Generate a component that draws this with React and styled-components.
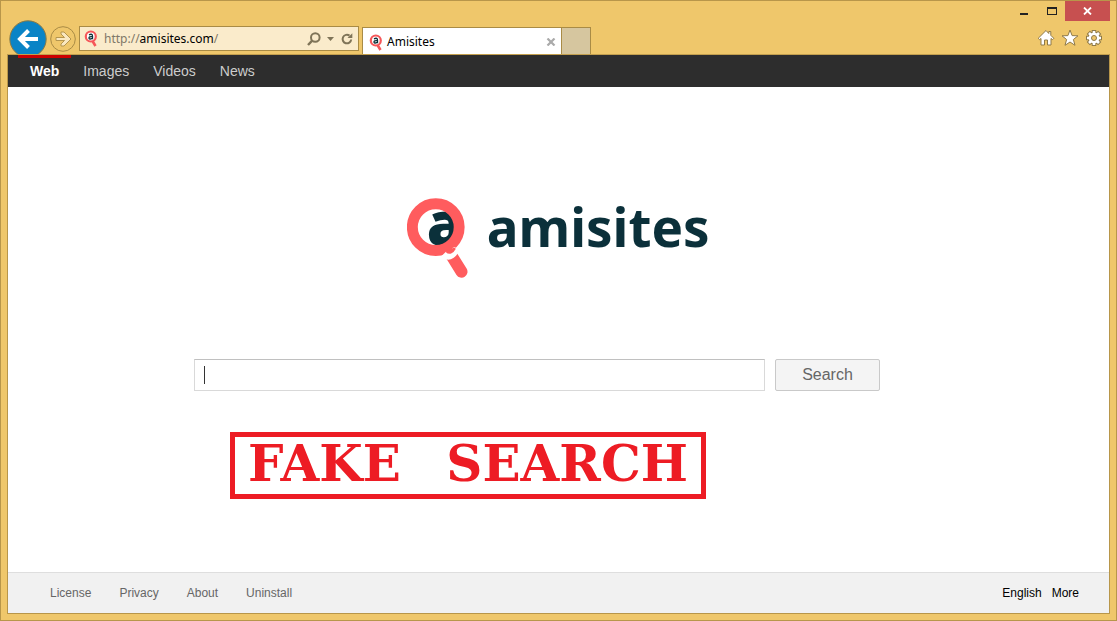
import React from "react";
import styled, { createGlobalStyle, css } from "styled-components";

const frame = "#b8964a";
const gold = "#efc76b";
const uiFont = `"Noto Sans", "Open Sans", sans-serif`;
const pageFont = `"Liberation Sans", Arial, sans-serif`;

const GlobalStyle = createGlobalStyle`
  * {
    box-sizing: border-box;
  }
  body {
    margin: 0;
    font-family: ${pageFont};
  }
  button {
    border: 0;
    padding: 0;
    background: none;
    font: inherit;
    cursor: pointer;
  }
  svg {
    display: block;
    flex: none;
  }
`;

const Window = styled.div`
  display: flex;
  flex-direction: column;
  min-height: 100vh;
  padding: 0 6px 6px;
  border: 1px solid ${frame};
  background: ${gold};
`;
const TitleBar = styled.div`
  display: flex;
  justify-content: flex-end;
  height: 20px;
`;
const WindowButton = styled.button`
  display: flex;
  align-items: center;
  justify-content: center;
  width: 27px;

  ${p =>
    p.$close &&
    css`
      width: 45px;
      background: #c75050;
    `}
`;
const ToolBar = styled.div`
  display: flex;
  align-items: flex-end;
  height: 33px;
  padding-left: 2px;
`;
const NavButton = styled.button`
  margin-right: ${p => p.$gap}px;
`;
const AddressBar = styled.form`
  display: flex;
  align-items: center;
  gap: 6px;
  width: 280px;
  height: 25px;
  margin: 0 3px 3px 0;
  padding: 0 4px;
  border: 1px solid #a98b45;
  background: #faebcb;
`;
const Url = styled.div`
  flex: 1;
  font: 12px/16px ${uiFont};
  color: #000;
`;
const Muted = styled.span`
  color: #7f7868;
`;
const Tabs = styled.div`
  display: flex;
  align-items: stretch;
  height: 27px;
  border: 1px solid #a98b45;
  border-bottom: 0;
`;
const Tab = styled.div`
  display: flex;
  align-items: center;
  gap: 4px;
  width: 199px;
  padding: 2px 5px 0 6px;
  border-right: 1px solid #a98b45;
  background: #fff;
  font: 12px/16px ${uiFont};
`;
const TabTitle = styled.span`
  flex: 1;
`;
const NewTab = styled.button`
  width: 28px;
  background: #d6c69f;
`;
const Tools = styled.div`
  display: flex;
  gap: 6px;
  margin: 0 7px 7px auto;
`;

const Page = styled.div`
  display: flex;
  flex-direction: column;
  flex: 1;
  border: 1px solid ${frame};
  border-top-color: #c39f4e;
  background: #fff;
`;
const TopNav = styled.nav`
  display: flex;
  height: 32px;
  padding-left: 10px;
  background: #2d2d2d;
`;
const TopLink = styled.a`
  padding: 5px 12px 0;
  border-top: 3px solid ${p => (p.$active ? "#cc0000" : "transparent")};
  color: ${p => (p.$active ? "#fff" : "#ccc")};
  font-size: 14px;
  font-weight: ${p => (p.$active ? "bold" : "normal")};
  line-height: 16px;
  text-decoration: none;
`;
const Main = styled.main`
  flex: 1;
  width: 100%;
  max-width: 729px;
  margin: 0 auto;
  padding-top: 110px;
`;
const Logo = styled.h1`
  display: flex;
  justify-content: center;
  gap: 18px;
  margin: 0 0 80px;
  color: #0b303a;
  font: bold 53px/60px ${uiFont};
`;
const SearchForm = styled.form`
  display: flex;
  gap: 10px;
  max-width: 686px;
  margin-bottom: 41px;
`;
const SearchInput = styled.input`
  flex: 1;
  min-width: 0;
  height: 32px;
  padding: 0 10px;
  border: 1px solid #d9d9d9;
  border-top-color: #c0c0c0;
  outline: 0;
  background: #fff linear-gradient(#333, #333) 9px 6px / 1px 18px no-repeat;
  font: 16px/20px ${pageFont};
`;
const SearchButton = styled.button`
  width: 105px;
  height: 32px;
  border: 1px solid #c9c9c9;
  border-radius: 2px;
  background: #f4f4f4;
  color: #666;
  font-size: 16px;
`;
const Stamp = styled.p`
  width: fit-content;
  height: 67px;
  margin: 0 0 0 36px;
  padding: 0 13px;
  border: 5px solid #ed1c24;
  color: #ed1c24;
  font: bold 50px/54px "DejaVu Serif", serif;
  white-space: nowrap;
`;
const StampWord = styled.span`
  & + & {
    margin-left: 28px;
  }
`;
const Footer = styled.footer`
  display: flex;
  justify-content: space-between;
  height: 41px;
  padding: 0 30px 0 42px;
  border-top: 1px solid #dedede;
  background: #f1f1f1;
  font-size: 12px;
  line-height: 40px;
`;
const FooterLinks = styled.div`
  display: flex;
  gap: ${p => p.$gap}px;
`;
const FooterLink = styled.a`
  color: ${p => (p.$dark ? "#000" : "#666")};
  text-decoration: none;
`;

const Mark = ({ size }) => (
  <svg width={size * 0.75} height={size} viewBox="0 0 62 82" aria-hidden="true">
    <clipPath id="lens">
      <circle cx="29" cy="30" r="19" />
    </clipPath>
    <circle cx="29" cy="30" r="19" fill="#fff" />
    <g clipPath="url(#lens)">
      <text
        x="20"
        y="48"
        fill="#0b303a"
        fontFamily="Noto Sans"
        fontSize="60"
        fontWeight="900"
      >
        a
      </text>
    </g>
    <circle cx="29" cy="30" r="23.6" fill="none" stroke="#ff5c5e" strokeWidth="11" />
    <path d="M45 59l10 16" stroke="#ff5c5e" strokeWidth="12" strokeLinecap="round" />
    <path d="M37 57q4 4 8 1t5-7" fill="none" stroke="#fff" strokeWidth="7" />
    <path d="M40 54q4 4 8-3" fill="#ff5c5e" stroke="#ff5c5e" strokeWidth="3" />
    <path d="M38 58q6 4 10 1t3-7" fill="none" stroke="#fff" strokeWidth="1" />
  </svg>
);

const FavIcon = () => (
  <svg width="14" height="17" viewBox="0 0 14 17" aria-hidden="true">
    <path d="M8.5 11l3 5" stroke="#f5575a" strokeWidth="2.6" />
    <circle cx="6.8" cy="6.5" r="5" fill="#fff" stroke="#f5575a" strokeWidth="2.2" />
    <path
      d="M5 4.8q3.5-1.6 3.5 1.4v3M8.2 6.6q-3.4-.2-3.2 1.6.6 1.6 3.2 0"
      fill="none"
      stroke="#0b303a"
      strokeWidth="1.3"
    />
  </svg>
);

const footerLinks = ["License", "Privacy", "About", "Uninstall"];
const topLinks = ["Web", "Images", "Videos", "News"];

const Chrome = () => (
  <>
    <TitleBar>
      <WindowButton aria-label="Minimize">
        <svg width="9" height="20">
          <path d="M0 12h8v2H0z" fill="#222" />
        </svg>
      </WindowButton>
      <WindowButton aria-label="Maximize">
        <svg width="10" height="20">
          <path d="M0 6h10v8H0zM1 8v5h8V8z" fill="#222" fillRule="evenodd" />
        </svg>
      </WindowButton>
      <WindowButton $close aria-label="Close">
        <svg width="9" height="8" viewBox="0 0 9 8">
          <path d="M1 .5l7 7M8 .5l-7 7" stroke="#fff" strokeWidth="1.8" />
        </svg>
      </WindowButton>
    </TitleBar>
    <ToolBar>
      <NavButton $gap={3} aria-label="Back">
        <svg width="38" height="34" viewBox="0 0 38 34">
          <circle cx="19" cy="19" r="18.2" fill="#0a84c6" stroke="#8b7a45" />
          <path
            d="M10.5 19H29M19.5 10.5L11 19l8.5 8.5"
            fill="none"
            stroke="#fff"
            strokeWidth="4"
          />
        </svg>
      </NavButton>
      <NavButton $gap={3} aria-label="Forward">
        <svg width="26" height="34" viewBox="0 0 26 34">
          <circle cx="13" cy="19" r="12.3" fill="none" stroke="#a98b45" />
          <path
            d="M6 17.5h8.5L11 14V12h3l7 7-7 7h-3v-2l3.500-3.500H6z"
            fill="#fae8c0"
            stroke="#b5964f"
          />
        </svg>
      </NavButton>
      <AddressBar>
        <FavIcon />
        <Url>
          <Muted>http://</Muted>amisites.com<Muted>/</Muted>
        </Url>
        <svg width="14" height="14" viewBox="0 0 14 14">
          <circle cx="8.300" cy="5.500" r="4.300" fill="none" stroke="#7f7458" strokeWidth="2" />
          <path d="M5.200 8.600L1 13" stroke="#7f7458" strokeWidth="2.400" />
        </svg>
        <svg width="7" height="4">
          <path d="M0 0h7L3.500 4z" fill="#7f7458" />
        </svg>
        <svg width="14" height="14" viewBox="0 0 14 14">
          <path
            d="M9.500 3.600A4.300 4.300 0 1 0 11.200 7.500"
            fill="none"
            stroke="#7f7458"
            strokeWidth="2"
          />
          <path d="M7.500 6h4.800V1.200z" fill="#7f7458" />
        </svg>
      </AddressBar>
      <Tabs>
        <Tab>
          <FavIcon />
          <TabTitle>Amisites</TabTitle>
          <button aria-label="Close tab">
            <svg width="10" height="8" viewBox="0 0 10 8">
              <path d="M1.500.5l7 7M8.500.5l-7 7" stroke="#aaa" strokeWidth="2.200" />
            </svg>
          </button>
        </Tab>
        <NewTab aria-label="New tab" />
      </Tabs>
      <Tools>
        <button aria-label="Home">
          <svg width="18" height="18" viewBox="0 0 18 18">
            <path
              d="M9 1.500L1.200 9.300l1.300 1.300L4 9.500v6.500h3.500v-5h3v5H14V9.500l1.500 1.100 1.300-1.300-3-3V2.500h-2v2z"
              fill="#fff"
              stroke="#8f7a48"
            />
          </svg>
        </button>
        <button aria-label="Favorites">
          <svg width="18" height="18" viewBox="0 0 18 18">
            <path
              d="M9 1l2.100 5.600 5.900.2-4.600 3.700 1.600 5.800L9 13l-5 3.300 1.600-5.800L1 6.800l5.900-.2z"
              fill="#fff"
              stroke="#8f7a48"
            />
          </svg>
        </button>
        <button aria-label="Settings">
          <svg width="18" height="18" viewBox="0 0 18 18">
            <g stroke="#8f7a48" strokeWidth="4.600">
              <path d="M9 1v16M1 9h16M3.300 3.300l11.400 11.400M14.700 3.300L3.300 14.700" />
            </g>
            <circle cx="9" cy="9" r="6.400" fill="#8f7a48" />
            <path
              d="M9 2v14M2 9h14M4 4l10 10M14 4L4 14"
              stroke="#fff"
              strokeWidth="2.600"
            />
            <circle cx="9" cy="9" r="5.400" fill="#fff" />
            <circle cx="9" cy="9" r="2.500" fill={gold} stroke="#8f7a48" />
          </svg>
        </button>
      </Tools>
    </ToolBar>
  </>
);

const App = () => (
  <Window>
    <GlobalStyle />
    <Chrome />
    <Page>
      <TopNav>
        {topLinks.map((name, i) => (
          <TopLink href="#" key={name} $active={i === 0}>
            {name}
          </TopLink>
        ))}
      </TopNav>
      <Main>
        <Logo>
          <Mark size={82} />
          amisites
        </Logo>
        <SearchForm>
          <SearchInput type="text" aria-label="Search the web" />
          <SearchButton type="button">Search</SearchButton>
        </SearchForm>
        <Stamp>
          <StampWord>FAKE</StampWord> <StampWord>SEARCH</StampWord>
        </Stamp>
      </Main>
      <Footer>
        <FooterLinks $gap={28}>
          {footerLinks.map(name => (
            <FooterLink href="#" key={name}>
              {name}
            </FooterLink>
          ))}
        </FooterLinks>
        <FooterLinks $gap={10}>
          <FooterLink href="#" $dark>
            English
          </FooterLink>
          <FooterLink href="#" $dark>
            More
          </FooterLink>
        </FooterLinks>
      </Footer>
    </Page>
  </Window>
);

export default App;
